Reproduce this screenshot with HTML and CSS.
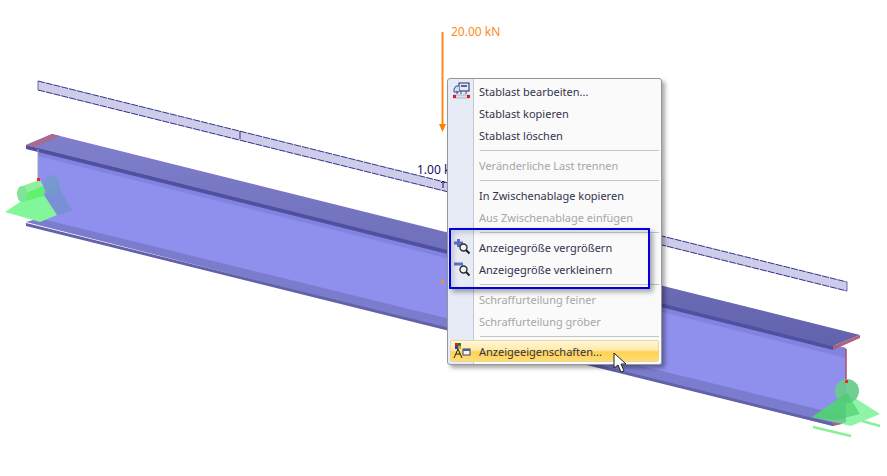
FILE: index.html
```html
<!DOCTYPE html>
<html lang="de">
<head>
    <meta charset="UTF-8">
    <meta name="viewport" content="width=device-width, initial-scale=1.0">
    <title>Anzeigegröße</title>
    <link rel="stylesheet" href="styles.css">
</head>
<body>
    <div class="stage">
        <!-- model view -->
        <svg class="scene" width="887" height="476" viewBox="0 0 887 476">
            <defs>
                <linearGradient id="flangeTop" x1="0" y1="0" x2="0" y2="1">
                    <stop offset="0" stop-color="#7f7fcb"/>
                    <stop offset="1" stop-color="#6262ad"/>
                </linearGradient>
            </defs>

            <!-- member line -->
            <polygon points="38,81 847,282 847,291 38,90" fill="#cdcde9"/>
            <path d="M38 81L847 282M38 90L847 291" stroke="#1c1c84" stroke-width="0.9" stroke-dasharray="7 1"/>
            <path d="M38 81v9M847 282v9" stroke="#6a6aa8"/>
            <line x1="240" y1="131" x2="240" y2="139" stroke="#30306a"/>

            <!-- beam -->
            <polygon points="38,148 846,348 846,420 833,424 38,224" fill="#8f8fee"/>
            <polygon points="38,148 846,348 846,358 38,156" fill="#7c7cd8" opacity="0.7"/>
            <polygon points="26,222 33,220 38,218 846,416 846,422 833,426" fill="#7c7cce"/>
            <polygon points="26,223 833,423 833,426 26,226" fill="#6262a8"/>
            <polygon points="26,145 52,134 860,335 833,346" fill="url(#flangeTop)"/>
            <polygon points="26,145 833,346 833,350 26,149" fill="#5050a0"/>
            <polygon points="26,145 52,134 60,136 34,147" fill="#a86a8e"/>
            <polygon points="833,346 860,335 860,338 833,350" fill="#b0607c"/>
            <polygon points="833,423 842,421 842,424 833,426" fill="#b0607c"/>
            <line x1="38" y1="149" x2="38" y2="180" stroke="#a0a0c0" stroke-width="1"/>
            <line x1="846" y1="349" x2="846" y2="382" stroke="#b04a68" stroke-width="1.5"/>

            <!-- left support -->
            <polygon points="44,195 58,186 72,210 58,215 48,212" fill="#6f90c8" opacity="0.65"/>
            <ellipse cx="52" cy="185" rx="8" ry="10" fill="#6f9cc4" opacity="0.75"/>
            <polygon points="5,212 26,198 44,195 57,215 40,222" fill="#82f69a"/>
            <polygon points="20,187 40,180 45,190 44,196 26,201" fill="#62f070"/>
            <polygon points="20,187 40,180 43,186 24,194" fill="#8ff0a0"/>
            <ellipse cx="22" cy="194" rx="5" ry="8" fill="#80e498"/>
            <rect x="37" y="178" width="3" height="3" fill="#ff2020"/>

            <!-- right support -->
            <polygon points="812,417 847,393 880,414 851,426" fill="#60f080" opacity="0.7"/>
            <circle cx="847" cy="391" r="12" fill="#68cc8c" opacity="0.95"/>
            <polygon points="847,393 860,414 836,420 812,417" fill="#44cc66" opacity="0.6"/>
            <line x1="813" y1="427" x2="851" y2="436" stroke="#88f09a" stroke-width="2.5"/>
            <line x1="862" y1="421" x2="880" y2="426" stroke="#88f09a" stroke-width="2.5"/>
            <rect x="845" y="380" width="3" height="3" fill="#ff2020"/>

            <!-- loads -->
            <line x1="442.5" y1="32" x2="442.5" y2="125" stroke="#ff8a1c" stroke-width="2"/>
            <polygon points="439,124 446,124 442.5,132" fill="#ff8000"/>
            <text class="load-orange" x="451" y="36">20.00 kN</text>
            <text class="load-blue" x="417" y="174">1.00 k</text>
            <path d="M443 188v-7m-2 2l2-2l2 2" fill="none" stroke="#10106a"/>
            <rect x="441" y="280" width="3" height="3" fill="#f09030"/>
        </svg>

        <!-- context menu -->
        <div class="menu">
            <div class="menu-item">
                <svg class="menu-icon" width="18" height="18" viewBox="0 0 18 18">
                    <rect x="6" y="1" width="10" height="8" fill="#e8e8f4" stroke="#26265a"/>
                    <rect x="8" y="3" width="6" height="2" fill="#56669c"/>
                    <path d="M6 4H3L1 7v3h5" fill="#d4daee" stroke="#2f4f96"/>
                    <path d="M4 9v3m4-3v3m5-3v3" stroke="#2a4698"/>
                    <rect x="1" y="13" width="15" height="3" fill="#e0e0f0" stroke="#7080a0" stroke-width="0.5"/>
                    <rect x="0" y="13" width="3" height="3" fill="#e01818"/>
                    <rect x="14" y="13" width="3" height="3" fill="#e01818"/>
                </svg>
                Stablast bearbeiten...
            </div>
            <div class="menu-item">Stablast kopieren</div>
            <div class="menu-item">Stablast löschen</div>
            <div class="menu-sep"></div>
            <div class="menu-item disabled">Veränderliche Last trennen</div>
            <div class="menu-sep"></div>
            <div class="menu-item">In Zwischenablage kopieren</div>
            <div class="menu-item disabled">Aus Zwischenablage einfügen</div>
            <div class="menu-sep"></div>
            <div class="menu-item">
                <svg class="menu-icon" width="18" height="18" viewBox="0 0 18 18">
                    <path d="M1 5h9M5.5 1v8" stroke="#5f6fc0" stroke-width="3"/>
                    <circle cx="10.5" cy="9.5" r="3.5" fill="#f4f4f4" stroke="#303030" stroke-width="1.4"/>
                    <path d="M13 12l3.5 3.5" stroke="#202020" stroke-width="2"/>
                </svg>
                Anzeigegröße vergrößern
            </div>
            <div class="menu-item">
                <svg class="menu-icon" width="18" height="18" viewBox="0 0 18 18">
                    <path d="M1 4h9" stroke="#5f6fc0" stroke-width="3"/>
                    <circle cx="10.5" cy="9.5" r="3.5" fill="#f4f4f4" stroke="#303030" stroke-width="1.4"/>
                    <path d="M13 12l3.5 3.5" stroke="#202020" stroke-width="2"/>
                </svg>
                Anzeigegröße verkleinern
            </div>
            <div class="menu-sep"></div>
            <div class="menu-item disabled">Schraffurteilung feiner</div>
            <div class="menu-item disabled">Schraffurteilung gröber</div>
            <div class="menu-sep"></div>
            <div class="menu-item active">
                <svg class="menu-icon" width="18" height="18" viewBox="0 0 18 18">
                    <rect x="2" y="1" width="3" height="3" fill="#d02020"/>
                    <rect x="5" y="1" width="3" height="3" fill="#208030"/>
                    <rect x="2" y="4" width="3" height="3" fill="#2040c0"/>
                    <rect x="5" y="4" width="3" height="3" fill="#e0a020"/>
                    <path d="M5 7L1 16M5 7l4 9M3 12h4" fill="none" stroke="#202020"/>
                    <rect x="10" y="7" width="7" height="6" fill="#f4f4f8" stroke="#404060"/>
                    <rect x="10" y="7" width="7" height="2" fill="#4060a0"/>
                </svg>
                Anzeigeeigenschaften...
            </div>
        </div>

        <!-- annotation frame -->
        <div class="frame"></div>

        <svg class="cursor" width="14" height="21" viewBox="0 0 14 21">
            <path d="M1 1v15l4-3 3 7 3-1-3-7h5z" fill="#fff" stroke="#222"/>
        </svg>
    </div>
</body>
</html>
```

FILE: styles.css
```css
body { margin: 0; background: white; font-family: "Noto Sans", "Open Sans", sans-serif; }
.stage { position: relative; width: 887px; height: 476px; overflow: hidden; }
.scene { position: absolute; left: 0; top: 0; }
.load-orange { font-size: 12px; fill: #ff8a1c; }
.load-blue { font-size: 12px; fill: #10106a; }

.menu { position: absolute; left: 447px; top: 78px; width: 209px; padding: 1px 2px 2px; background: linear-gradient(to right, #e6ebf5 25px, #c5c8ce 25px, #c5c8ce 26px, #fafafa 26px); border: 1px solid #979797; border-radius: 3px; box-shadow: 3px 3px 4px rgba(0,0,0,0.35); font-size: 11px; color: #33334d; }
.menu-item { position: relative; height: 22px; line-height: 22px; padding-left: 28px; border: 1px solid transparent; box-sizing: border-box; border-radius: 2px; white-space: nowrap; }
.menu-item.disabled { color: #a6a6a6; }
.menu-item.active { background: linear-gradient(to bottom, #fff6da, #ffe9a8 45%, #ffd252 55%, #ffdc74); border-color: #e6d8a4; }
.menu-icon { position: absolute; left: 2px; top: 1px; }
.menu-sep { height: 1px; margin: 4px 0 3px 30px; background: #c5c5c5; }

.frame { position: absolute; left: 449px; top: 228px; width: 197px; height: 57px; border: 2px solid #0000e0; box-shadow: 3px 3px 5px rgba(0,0,0,0.35), inset 3px 3px 5px rgba(0,0,0,0.15); }
.cursor { position: absolute; left: 613px; top: 352px; }
```
